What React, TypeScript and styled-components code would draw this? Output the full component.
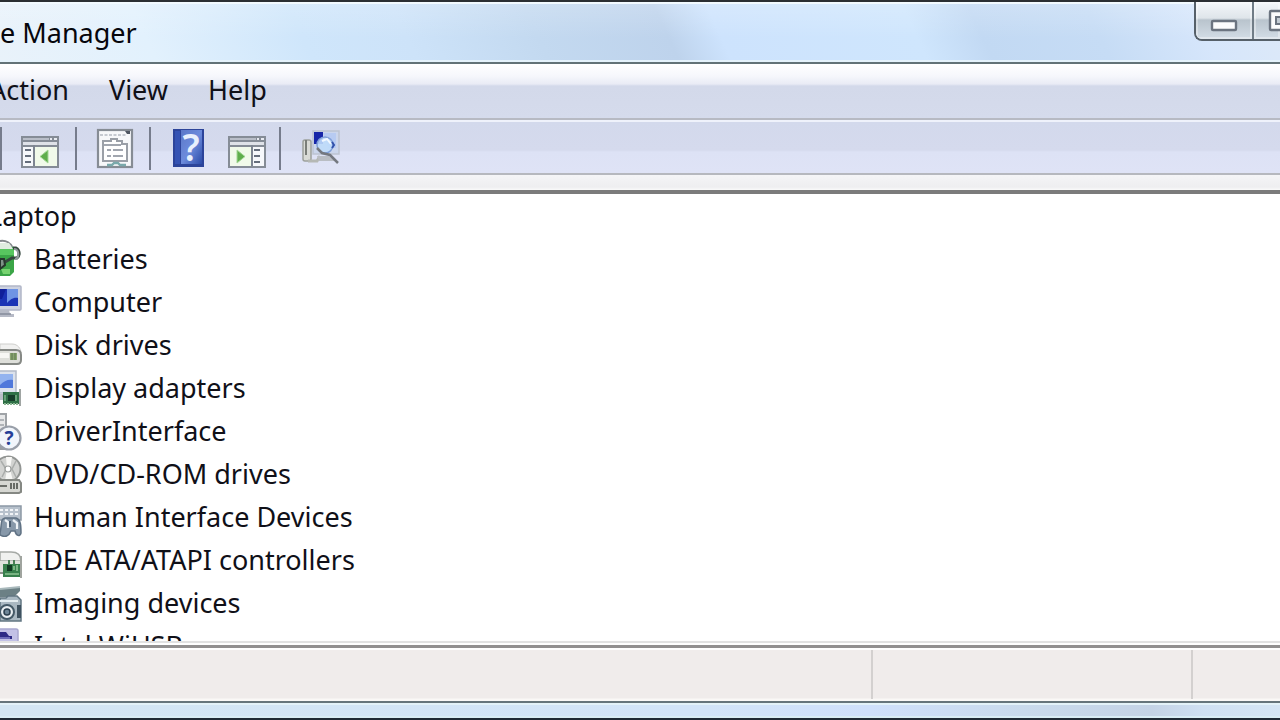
import React from "react";
import styled, { createGlobalStyle } from "styled-components";

const GlobalStyle = createGlobalStyle`
  *, *::before, *::after { box-sizing: border-box; }
  body {
    margin: 0;
    background: #fff;
    color: #101018;
    font-family: "Noto Sans", "Open Sans", sans-serif;
    font-size: 27px;
    line-height: 32px;
  }
`;

const Window = styled.div`
  display: flex;
  flex-direction: column;
  height: 100vh;
  min-height: 320px;
  overflow: hidden;
  border-top: 2px solid #2b2f33;
  border-bottom: 2px solid #1f2a35;
`;

const TitleBar = styled.header`
  display: flex;
  flex: none;
  justify-content: space-between;
  height: 62px;
  overflow: hidden;
  border-bottom: 2px solid #627277;
  box-shadow: inset 0 2px 0 #f2faff, inset 0 -2px 0 #e4f2fb;
  background:
    linear-gradient(180deg, rgba(255, 255, 255, 0.2), rgba(255, 255, 255, 0) 60%),
    linear-gradient(
      65deg,
      #e9f2fa 0%,
      #e2f1fd 12%,
      #cfe6fb 24%,
      #cde3f9 32%,
      #c3d9f0 42%,
      #bed3ec 52%,
      #cde3fd 56%,
      #cfe6fd 71%,
      #c2d9f3 76%,
      #c6dcf5 85%,
      #d6e6fb 93%,
      #dde9f8 100%
    );
`;

const Title = styled.h1`
  margin: 0;
  padding-top: 15px;
  font-size: 27px;
  font-weight: 400;
  line-height: 32px;
  color: #06060c;
`;

const Caption = styled.div`
  display: flex;
  height: 39px;
  overflow: hidden;
  border: 2px solid #566069;
  border-width: 0 0 2px 2px;
  border-bottom-left-radius: 8px;
`;

const CaptionButton = styled.button<{ $clipped?: boolean }>`
  display: flex;
  justify-content: ${(p) => (p.$clipped ? "flex-start" : "center")};
  width: ${(p) => (p.$clipped ? 26 : 58)}px;
  padding: 0 0 0 ${(p) => (p.$clipped ? 14 : 0)}px;
  overflow: hidden;
  border: 0;
  border-right: ${(p) => (p.$clipped ? "0" : "2px solid #707c86")};
  background: linear-gradient(180deg, #f4f7fa 0, #dfe5ea 16px, #b9c4cd 18px, #d3dde6 100%);
  box-shadow: inset 0 0 0 2px rgba(255, 255, 255, 0.35);

  svg { flex: none; }
`;

const MenuBar = styled.nav`
  display: flex;
  flex: none;
  height: 56px;
  padding-top: 10px;
  overflow: hidden;
  border-bottom: 2px solid #b7bac3;
  background: linear-gradient(180deg, #ffffff 0, #f6f7fc 12px, #e9ebf5 20px, #d3d9ea 22px, #d5dbec 100%);
`;

const MenuButton = styled.button<{ $first?: boolean }>`
  height: 32px;
  margin-left: ${(p) => (p.$first ? -31 : 0)}px;
  padding: 0 20px;
  border: 0;
  background: none;
  color: inherit;
  font: inherit;
`;

const ToolBar = styled.div`
  display: flex;
  flex: none;
  align-items: flex-start;
  height: 55px;
  padding-top: 5px;
  overflow: hidden;
  border-top: 2px solid #eff2fb;
  border-bottom: 2px solid #b6b8be;
  background: linear-gradient(180deg, #d3d9ec 0, #d5daed 28px, #dde2f5 30px, #dfe3f6 100%);
`;

const Separator = styled.span`
  flex: none;
  width: 2px;
  height: 43px;
  background: #767c8c;
`;

const ToolButton = styled.button<{ $width: number }>`
  display: flex;
  justify-content: center;
  width: ${(p) => p.$width}px;
  height: 42px;
  padding: 0 0 0 3px;
  border: 0;
  background: none;

  svg { flex: none; overflow: visible; }
`;

const ToolGroup = styled.div`
  display: flex;
  padding-right: 12px;
`;

const Gutter = styled.div`
  flex: none;
  height: 15px;
  background: linear-gradient(180deg, #f5f5f7 0, #eeeef0 80%, #fafafa 100%);
`;

const Tree = styled.main`
  flex: 1;
  min-height: 0;
  overflow: hidden;
  border-top: 4px solid #7b7b7b;
  border-bottom: 2px solid #e2e2e2;
  background: #fff;
`;

const TreeList = styled.ul`
  margin: 0;
  padding: 0;
  list-style: none;
`;

const TreeRow = styled.li`
  display: flex;
  align-items: center;
  height: 43px;
  white-space: nowrap;

  svg { flex: none; }
`;

const RootLabel = styled.span`
  margin-left: -12px;
`;

const RowLabel = styled.span`
  padding-left: 10px;
`;

const StatusBar = styled.footer`
  display: grid;
  flex: none;
  grid-template-columns: minmax(0, 874fr) minmax(0, 320fr) minmax(0, 87fr);
  height: 58px;
  margin-top: 2px;
  padding: 2px 0;
  border-top: 3px solid #929090;
  border-bottom: 2px solid #66757b;
  background: linear-gradient(180deg, #fff 0 2px, #f0eceb 2px 50px, #faf8f6 51px);
`;

const StatusCell = styled.div`
  border-right: 2px solid #d3d0cf;

  &:last-child { border-right: 0; }
`;

const BottomFrame = styled.div`
  flex: none;
  height: 15px;
  border-top: 2px solid #e3f2f8;
  border-bottom: 2px solid #d9edf5;
  background: linear-gradient(90deg, #d3e6f3 0%, #d2e4f8 55%, #cfe0fb 68%, #c9daec 80%, #c4d3e6 90%, #cfe0f2 94%, #d5e6f5 100%);
`;

const MinimizeIcon = () => (
  <svg width="28" height="37" viewBox="0 0 28 37" aria-hidden="true">
    <rect x="2" y="19" width="24" height="9" rx="1" fill="#fbfcfd" stroke="#6b7480" strokeWidth="2.4" />
  </svg>
);

const MaximizeIcon = () => (
  <svg width="28" height="37" viewBox="0 0 28 37" aria-hidden="true">
    <rect x="2" y="9" width="24" height="19" rx="1" fill="#fbfcfd" stroke="#6b7480" strokeWidth="2.4" />
    <rect x="8" y="15" width="12" height="7" fill="#c3ccd4" stroke="#6b7480" strokeWidth="2" />
  </svg>
);

const PaneIcon = ({ right }: { right?: boolean }) => {
  const side = right ? 27 : 5;
  return (
    <svg width="40" height="42" viewBox="0 0 40 42" aria-hidden="true">
      <rect x="1" y="9" width="38" height="32" fill="#858c96" />
      <rect x="3" y="11" width="26" height="2" fill="#b9bec8" />
      <path d="M30 11h2v2h-2zM34 11h3v2h-3z" fill="#e8ebf1" />
      <rect x="3" y="15" width="34" height="3" fill="#dfe2e8" />
      <rect x="3" y="20" width="34" height="19" fill="#f6f8fb" />
      <rect x={right ? 24 : 13} y="18" width="2" height="21" fill="#7d8591" />
      <rect x={right ? 3 : 15} y="20" width={right ? 21 : 22} height="19" fill="#f1faea" />
      <path d={`M${side} 23h6M${side} 29h6M${side} 35h6`} stroke="#656e7c" strokeWidth="2.2" />
      {right ? (
        <path d="M10 23l8 6.500-8 6.500z" fill="#5fae4c" stroke="#a3d796" strokeWidth="1" />
      ) : (
        <path d="M28 23l-8 6.500 8 6.500z" fill="#5fae4c" stroke="#a3d796" strokeWidth="1" />
      )}
    </svg>
  );
};

const PropertiesIcon = () => (
  <svg width="40" height="42" viewBox="0 0 40 42" aria-hidden="true">
    <rect x="3" y="3" width="34" height="37" fill="#f7f8fa" stroke="#868c94" strokeWidth="2.2" />
    <path d="M5 8h26" stroke="#c6cad1" strokeWidth="2" strokeDasharray="3 1.500" />
    <path d="M30 4h5v3h-3z" fill="#4f5661" />
    <path d="M8 14h8v-2h6v2h5v3h5v17H8z" fill="#fff" stroke="#9a9fa7" strokeWidth="2" />
    <path d="M9 18h17M12 23h4M18 23h10M12 29h4M18 29h10" stroke="#a1a6af" strokeWidth="2" />
    <path d="M12 38h5l2-2h4l2 2h6" stroke="#7aa9ab" strokeWidth="2.400" fill="none" />
  </svg>
);

const HelpIcon = () => (
  <svg width="36" height="42" viewBox="0 0 36 42" aria-hidden="true">
    <defs>
      <linearGradient id="helpCover" x1="0" y1="0" x2="1" y2="1">
        <stop offset="0" stopColor="#5b78c8" />
        <stop offset="0.5" stopColor="#6c8bdc" />
        <stop offset="1" stopColor="#2c4ba8" />
      </linearGradient>
    </defs>
    <rect x="2" y="2" width="31" height="38" fill="#2c449a" />
    <rect x="10" y="3" width="21" height="34" fill="url(#helpCover)" />
    <rect x="4" y="4" width="5" height="33" fill="#3553b4" />
    <text x="20" y="34" textAnchor="middle" fontFamily="Noto Sans, sans-serif" fontSize="37" fontWeight="600" fill="#e8f0fd">
      ?
    </text>
  </svg>
);

const ScanIcon = () => (
  <svg width="42" height="42" viewBox="0 0 42 42" aria-hidden="true">
    <rect x="3" y="13" width="8" height="21" rx="2" fill="#d9dbd6" stroke="#9da19c" strokeWidth="1.500" />
    <path d="M6 13v15" stroke="#7a7e79" strokeWidth="2" />
    <path d="M8 34h9l3-5" stroke="#b5b8b4" strokeWidth="3" fill="none" />
    <rect x="13" y="4" width="26" height="23" fill="#cbd6ec" stroke="#bcc3d1" strokeWidth="1.500" />
    <rect x="14" y="5" width="9" height="12" fill="#1626a8" />
    <path d="M23 6h13v15h-8z" fill="#b7cbf2" />
    <path d="M17 29h12l6 5H19z" fill="#b9bdc3" />
    <circle cx="25" cy="18" r="8" fill="#bfdcfa" fillOpacity="0.9" stroke="#7f9fd8" strokeWidth="1.500" />
    <path d="M22 14l5-2 4 5" stroke="#f1f8ff" strokeWidth="2" fill="none" />
    <path d="M32 15l2 3-2 3" stroke="#3252ab" strokeWidth="2" fill="none" />
    <path d="M17 21l5 5 8 2 8 8" stroke="#74787f" strokeWidth="2.500" fill="none" />
  </svg>
);

/* Device icons run off the left edge of the window, so each one is its visible right part. */
const DeviceSvg = ({ children }: { children: React.ReactNode }) => (
  <svg width="24" height="40" viewBox="0 0 24 40" aria-hidden="true">
    {children}
  </svg>
);

const BatteryIcon = () => (
  <DeviceSvg>
    <path d="M0 2c6-1 11 2 13 7" stroke="#85898d" strokeWidth="2" fill="none" />
    <path d="M0 8h14v25l-4 4H0z" fill="#3ba547" />
    <path d="M0 4h9l4 6H0z" fill="#e0ece0" />
    <path d="M0 10h14v6H0z" fill="#58c55f" />
    <path d="M1 30h9v5H3z" fill="#77d36f" />
    <path d="M0 20l5 3 7-4h5c3-2 3-8-1-10h-3" stroke="#35463e" strokeWidth="3" fill="none" />
    <path d="M0 20h4l1 6-5 4z" fill="#7e9188" stroke="#26362d" strokeWidth="2" />
    <path d="M14 10c5 0 6 9 1 10" stroke="#929a9d" strokeWidth="2" fill="none" />
  </DeviceSvg>
);

const ComputerIcon = () => (
  <DeviceSvg>
    <rect x="-4" y="4" width="25" height="24" rx="1" fill="#cdd2e0" stroke="#b1b6c7" strokeWidth="1.500" />
    <rect x="-2" y="7" width="20" height="17" fill="#1b34b5" />
    <path d="M7 7h11v9c-5-1-8 2-11 5z" fill="#6f94e4" />
    <path d="M0 7h6l-4 10H0z" fill="#10209a" />
    <path d="M0 28h9l1 4h4v3H0z" fill="#b6bac6" />
    <path d="M0 32h11" stroke="#858b9a" strokeWidth="1.500" />
  </DeviceSvg>
);

const DiskIcon = () => (
  <DeviceSvg>
    <path d="M0 19h12c6 0 9 5 9 9H0z" fill="#f1f1f0" stroke="#cfcfcd" strokeWidth="1" />
    <path d="M-2 25h18c4 0 5 2 5 5v5c0 2-1 4-4 4H-2z" fill="#dedfda" stroke="#868985" strokeWidth="2" />
    <path d="M0 28h9v5H0z" fill="#f7f7f4" />
    <rect x="10" y="28" width="7" height="7" fill="#89a56f" />
    <path d="M12 28v7M15 28v7" stroke="#5d7650" strokeWidth="1" />
  </DeviceSvg>
);

const DisplayIcon = () => (
  <DeviceSvg>
    <rect x="-4" y="3" width="20" height="22" fill="#dce2ec" stroke="#b3bac8" strokeWidth="1.500" />
    <rect x="-2" y="6" width="15" height="14" fill="#4f78db" />
    <path d="M0 6h13v6c-5-1-9 1-13 5z" fill="#93b3ef" />
    <path d="M0 26h6v6H0z" fill="#b9bec6" />
    <rect x="3" y="24" width="16" height="12" fill="#2f7046" />
    <path d="M20 21v17" stroke="#a0a5a3" strokeWidth="2" />
    <rect x="8" y="27" width="7" height="6" fill="#163c29" />
    <path d="M4 36h14" stroke="#8ab592" strokeWidth="2" strokeDasharray="2 1" />
    <path d="M16 27v6M5 27v6" stroke="#78ae85" strokeWidth="1.500" />
  </DeviceSvg>
);

const UnknownDeviceIcon = () => (
  <DeviceSvg>
    <rect x="-3" y="3" width="9" height="28" fill="#e7e8e9" stroke="#9fa3a7" strokeWidth="2" />
    <path d="M0 9h4M0 14h4" stroke="#b0b4b8" strokeWidth="2" />
    <path d="M0 35h6l3 4H0z" fill="#999da1" />
    <circle cx="9" cy="27" r="11.500" fill="#f1f5fb" stroke="#999fa9" strokeWidth="2.200" />
    <text x="9" y="34" textAnchor="middle" fontFamily="Noto Sans, sans-serif" fontSize="19" fontWeight="700" fill="#253f98">
      ?
    </text>
  </DeviceSvg>
);

const OpticalIcon = () => (
  <DeviceSvg>
    <circle cx="8" cy="15" r="12.500" fill="#d2d3d1" stroke="#929593" strokeWidth="2" />
    <path d="M6 3h6l-2 12 3 12H5l2-12z" fill="#f8f8f6" />
    <path d="M1 7l5 8-4 8M16 7l-4 8 4 8" stroke="#aaadab" strokeWidth="1.500" fill="none" />
    <circle cx="8" cy="15" r="3" fill="#fff" stroke="#999c9a" strokeWidth="1.200" />
    <path d="M-2 26h21l2 3v9l-2 1H-2z" fill="#d6d7d2" stroke="#858883" strokeWidth="2" />
    <path d="M0 32h7" stroke="#6b6e69" strokeWidth="2" />
    <path d="M11 29v6M14 29v6M17 29v6" stroke="#5c605a" strokeWidth="1.800" />
  </DeviceSvg>
);

const HidIcon = () => (
  <DeviceSvg>
    <rect x="-2" y="9" width="23" height="14" fill="#b7c1cc" stroke="#8c98a5" strokeWidth="1.500" />
    <path d="M0 13h20M0 17h20" stroke="#f1f4f7" strokeWidth="2" strokeDasharray="3 2" />
    <path d="M0 36c2-8 0-14 5-15h11c5 1 5 9 5 15-1 4-5 3-6-2h-4c-2 5-6 7-11 4z" fill="#8798a9" stroke="#607284" strokeWidth="1.500" />
    <path d="M5 23l3 2v6M13 23l4 3v6" stroke="#edf2f6" strokeWidth="2.200" fill="none" />
    <path d="M10 24v6" stroke="#4b5d70" strokeWidth="2" />
  </DeviceSvg>
);

const IdeIcon = () => (
  <DeviceSvg>
    <path d="M0 12h11c7 0 10 4 10 9H0z" fill="#f0f1ef" stroke="#a5a9a5" strokeWidth="1.500" />
    <path d="M0 21h21v13H0z" fill="#dfe2dc" />
    <path d="M0 33h6" stroke="#8c918b" strokeWidth="2" />
    <rect x="3" y="24" width="17" height="13" fill="#38804c" />
    <rect x="7" y="25" width="5" height="6" fill="#123a22" />
    <path d="M14 26v4M17 25v6M5 34h14" stroke="#8fc594" strokeWidth="1.600" />
    <path d="M9 20v4M14 20v4" stroke="#4c8057" strokeWidth="2" />
    <path d="M21 16v22" stroke="#a0a49f" strokeWidth="2" />
  </DeviceSvg>
);

const ImagingIcon = () => (
  <DeviceSvg>
    <path d="M0 6L20 4v4l-6 6H0z" fill="#6c8085" />
    <path d="M0 6l20-2" stroke="#a9b9bc" strokeWidth="2" />
    <path d="M0 15h6l2-2h9l4 4v21H0z" fill="#a9b8c2" stroke="#617581" strokeWidth="1.500" />
    <path d="M0 18h18" stroke="#e4edf1" strokeWidth="2" />
    <rect x="17" y="22" width="4" height="13" fill="#3f5260" />
    <circle cx="7" cy="29" r="7" fill="#e7edf1" stroke="#445967" strokeWidth="2" />
    <circle cx="7" cy="29" r="3" fill="#6e8697" stroke="#2b3f4e" strokeWidth="1.500" />
  </DeviceSvg>
);

const WirelessUsbIcon = () => (
  <DeviceSvg>
    <rect x="-3" y="3" width="21" height="32" rx="2" fill="#c2c1e6" stroke="#a9a8cf" strokeWidth="1.500" />
    <path d="M0 6h6l3 4h3v3H0z" fill="#2d2a86" />
    <path d="M0 12h10" stroke="#6c6bb8" strokeWidth="2" />
  </DeviceSvg>
);

const devices = [
  { name: "Batteries", Icon: BatteryIcon },
  { name: "Computer", Icon: ComputerIcon },
  { name: "Disk drives", Icon: DiskIcon },
  { name: "Display adapters", Icon: DisplayIcon },
  { name: "DriverInterface", Icon: UnknownDeviceIcon },
  { name: "DVD/CD-ROM drives", Icon: OpticalIcon },
  { name: "Human Interface Devices", Icon: HidIcon },
  { name: "IDE ATA/ATAPI controllers", Icon: IdeIcon },
  { name: "Imaging devices", Icon: ImagingIcon },
  { name: "Intel WiUSB", Icon: WirelessUsbIcon },
];

export default function App() {
  return (
    <Window>
      <GlobalStyle />
      <TitleBar>
        <Title>e Manager</Title>
        <Caption>
          <CaptionButton aria-label="Minimize">
            <MinimizeIcon />
          </CaptionButton>
          <CaptionButton $clipped aria-label="Maximize">
            <MaximizeIcon />
          </CaptionButton>
        </Caption>
      </TitleBar>
      <MenuBar>
        <MenuButton $first>Action</MenuButton>
        <MenuButton>View</MenuButton>
        <MenuButton>Help</MenuButton>
      </MenuBar>
      <ToolBar>
        <Separator />
        <ToolButton $width={73} aria-label="Show or hide console tree">
          <PaneIcon />
        </ToolButton>
        <Separator />
        <ToolButton $width={72} aria-label="Properties">
          <PropertiesIcon />
        </ToolButton>
        <Separator />
        <ToolGroup>
          <ToolButton $width={72} aria-label="Help">
            <HelpIcon />
          </ToolButton>
          <ToolButton $width={44} aria-label="Show or hide action pane">
            <PaneIcon right />
          </ToolButton>
        </ToolGroup>
        <Separator />
        <ToolButton $width={76} aria-label="Scan for hardware changes">
          <ScanIcon />
        </ToolButton>
      </ToolBar>
      <Gutter />
      <Tree>
        <TreeList>
          <TreeRow>
            <RootLabel>Laptop</RootLabel>
          </TreeRow>
          {devices.map(({ name, Icon }) => (
            <TreeRow key={name}>
              <Icon />
              <RowLabel>{name}</RowLabel>
            </TreeRow>
          ))}
        </TreeList>
      </Tree>
      <StatusBar>
        <StatusCell />
        <StatusCell />
        <StatusCell />
      </StatusBar>
      <BottomFrame />
    </Window>
  );
}
